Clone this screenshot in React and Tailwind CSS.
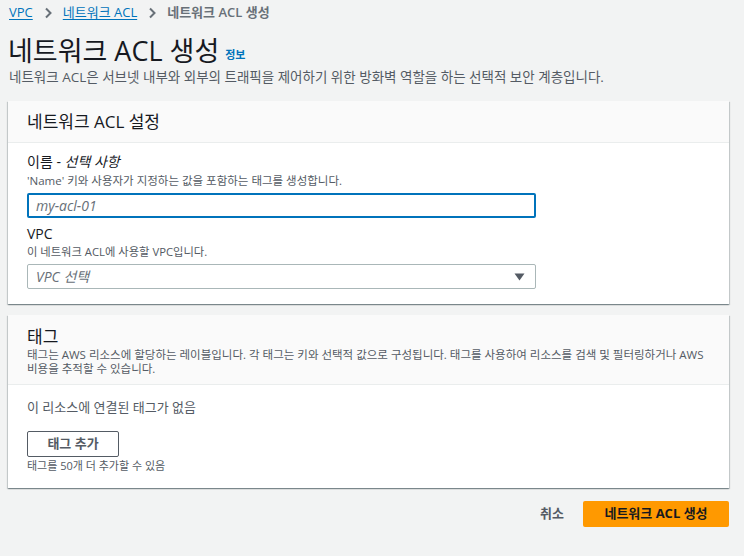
const font = "font-['Open_Sans','Noto_Sans_CJK_KR',sans-serif]";

const Chevron = () => (
  <svg width="10" height="12" viewBox="0 0 10 12" className="mx-[10px]">
    <path d="M3 1.5 L7.5 6 L3 10.5" fill="none" stroke="#687078" strokeWidth="2" />
  </svg>
);

const Card = ({ header, children }) => (
  <div className="bg-white mx-[8px] w-[721px] shadow-[0_1px_1px_0_rgba(0,28,36,0.3),1px_1px_1px_0_rgba(0,28,36,0.15),-1px_1px_1px_0_rgba(0,28,36,0.15)]">
    <div className="bg-[#fafafa] border-b border-[#eaeded] px-[19px]">{header}</div>
    <div className="px-[19px]">{children}</div>
  </div>
);

const App = () => {
  return (
    <div className={`${font} bg-[#f2f3f3] w-[744px] h-[556px] overflow-hidden text-[#16191f]`}>
      <div className="flex items-center h-[20px] mt-[3px] px-[9px] text-[13px]">
        <span className="text-[#0073bb] underline underline-offset-2">VPC</span>
        <Chevron />
        <span className="text-[#0073bb] underline underline-offset-2">네트워크 ACL</span>
        <Chevron />
        <span className="text-[#687078] font-semibold">네트워크 ACL 생성</span>
      </div>
      <div className="flex items-end px-[8px] mt-[11px] h-[34px]">
        <h1 className="text-[27px] leading-[34px]">네트워크 ACL 생성</h1>
        <span className="ml-[6px] mb-[5px] text-[11px] font-bold text-[#0073bb]">정보</span>
      </div>
      <p className="px-[9px] text-[13.5px] leading-[18px] text-[#545b64]">
        네트워크 ACL은 서브넷 내부와 외부의 트래픽을 제어하기 위한 방화벽 역할을 하는 선택적 보안 계층입니다.
      </p>

      <div className="mt-[15px]">
        <Card
          header={<h2 className="text-[17px] leading-[41px]">네트워크 ACL 설정</h2>}
        >
          <div className="pt-[9px] pb-[15px]">
            <div className="text-[14px] leading-[20px]">
              이름 - <span className="italic">선택 사항</span>
            </div>
            <div className="text-[11.5px] leading-[18px] text-[#545b64]">
              'Name' 키와 사용자가 지정하는 값을 포함하는 태그를 생성합니다.
            </div>
            <div className="mt-[3px] w-[509px] h-[25px] border-2 border-[#0073bb] rounded-[2px] flex items-center px-[7px] text-[14px] italic text-[#687078]">
              my-acl-01
            </div>
            <div className="mt-[6px] text-[14px] leading-[20px]">VPC</div>
            <div className="text-[11.3px] leading-[16px] text-[#545b64]">이 네트워크 ACL에 사용할 VPC입니다.</div>
            <div className="mt-[4px] w-[509px] h-[25px] border border-[#aab7b8] rounded-[2px] flex items-center justify-between pl-[8px] pr-[10px] text-[14px] italic text-[#687078]">
              <span>VPC 선택</span>
              <svg width="11" height="8" viewBox="0 0 11 8">
                <path d="M0.5 0.5 H10.5 L5.5 7.5 Z" fill="#545b64" />
              </svg>
            </div>
          </div>
        </Card>
      </div>

      <div className="mt-[11px]">
        <Card
          header={
            <div className="pt-[10px] pb-[8px]">
              <h2 className="text-[17px] leading-[23px]">태그</h2>
              <p className="text-[11.5px] leading-[14px] text-[#545b64]">
                태그는 AWS 리소스에 할당하는 레이블입니다. 각 태그는 키와 선택적 값으로 구성됩니다. 태그를 사용하여 리소스를 검색 및 필터링하거나 AWS
                <br />
                비용을 추적할 수 있습니다.
              </p>
            </div>
          }
        >
          <div className="pt-[12px] pb-[14px]">
            <div className="text-[13px] leading-[20px] text-[#545b64]">이 리소스에 연결된 태그가 없음</div>
            <button className="mt-[14px] w-[92px] h-[26px] border border-[#545b64] rounded-[2px] text-[13px] font-bold text-[#545b64] flex items-center justify-center">
              태그 추가
            </button>
            <div className="mt-[1px] text-[11px] leading-[16px] text-[#545b64]">태그를 50개 더 추가할 수 있음</div>
          </div>
        </Card>
      </div>

      <div className="flex items-center justify-end mt-[13px] mr-[15px]">
        <span className="text-[13px] font-bold text-[#545b64] mr-[19px]">취소</span>
        <button className="w-[146px] h-[26px] bg-[#ff9900] rounded-[2px] text-[13px] font-bold text-[#16191f] flex items-center justify-center">
          네트워크 ACL 생성
        </button>
      </div>
    </div>
  );
};

export default App;
